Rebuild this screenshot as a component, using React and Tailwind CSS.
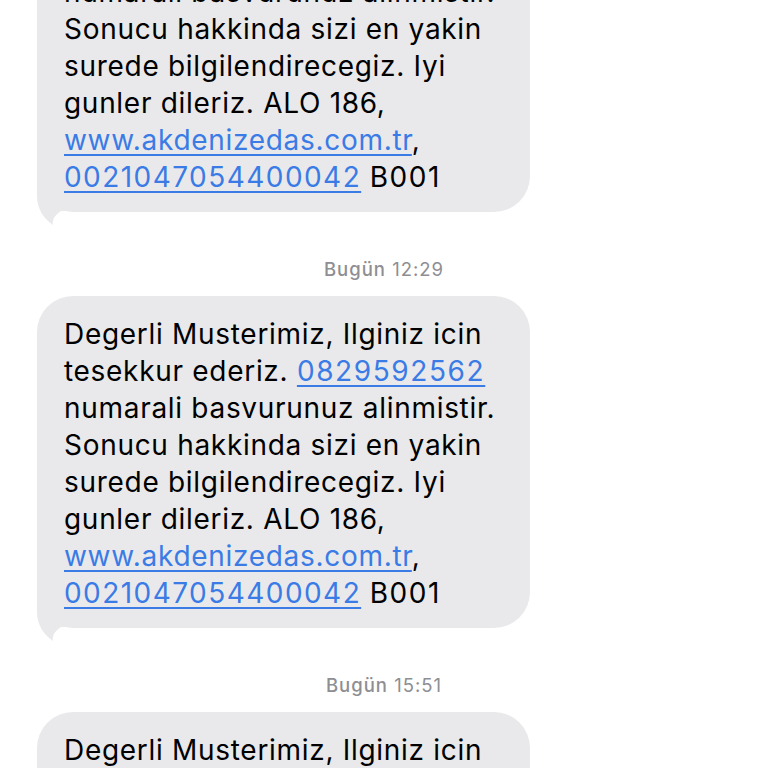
import React from "react";

const LINK = "text-[#3a7be6] underline decoration-[1.5px] underline-offset-[4px]";

function Bubble({ top }) {
  return (
    <div className="relative ml-[37px] w-[493px] rounded-[36px] bg-[#e9e9eb] px-[27px] pt-[20px] pb-[16px] text-[28px] leading-[37px] tracking-[0.7px] text-black" style={top ? { marginTop: top } : undefined}>
      <svg className="absolute left-0 bottom-[-14px]" width="50" height="50" viewBox="0 0 50 50">
        <path d="M0 0 L0 20 C0 32 6 42 16 49 C15 44 17 40 24 35 L50 35 L50 0 Z" fill="#e9e9eb" />
      </svg>
      <div className="relative">
        <div>Degerli Musterimiz, Ilginiz icin</div>
        <div>
          tesekkur ederiz. <span className={LINK + " tracking-[1.6px]"}>0829592562</span>
        </div>
        <div>numarali basvurunuz alinmistir.</div>
        <div>Sonucu hakkinda sizi en yakin</div>
        <div>surede bilgilendirecegiz. Iyi</div>
        <div>gunler dileriz. ALO 186,</div>
        <div>
          <span className={LINK}>www.akdenizedas.com.tr</span>,
        </div>
        <div>
          <span className={LINK + " tracking-[1.45px]"}>0021047054400042</span> <span className="tracking-[1.5px]">B001</span>
        </div>
      </div>
    </div>
  );
}

function Stamp({ time }) {
  return (
    <div className="mt-[47px] mb-[17px] text-center text-[18.5px] leading-[20px] tracking-[1px] text-[#8e8e93]">
      <span className="font-medium">Bugün</span> {time}
    </div>
  );
}

export default function App() {
  return (
    <div className="w-[768px] h-[768px] overflow-hidden bg-white" style={{ fontFamily: "Inter, 'Noto Sans', sans-serif" }}>
      <div className="flex flex-col">
        <Bubble top={-120} />
        <Stamp time="12:29" />
        <Bubble />
        <Stamp time="15:51" />
        <Bubble />
      </div>
    </div>
  );
}
